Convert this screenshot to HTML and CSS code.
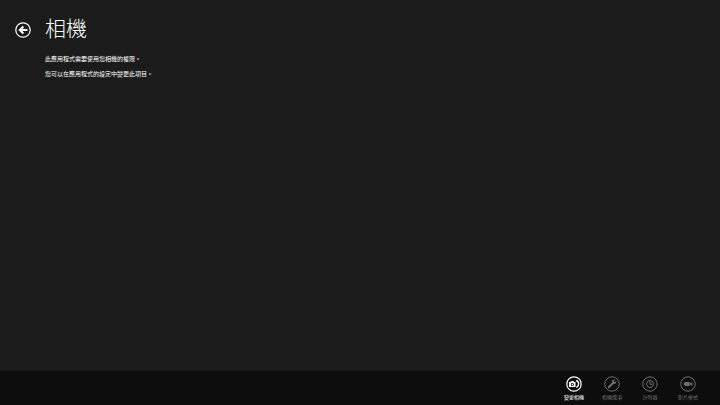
FILE: index.html
```html
<!DOCTYPE html>
<html lang="zh-TW">
<head>
    <meta charset="UTF-8">
    <meta name="viewport" content="width=device-width, initial-scale=1.0">
    <title>相機</title>
    <link rel="stylesheet" href="styles.css">
</head>
<body>
    <header>
        <button class="back" aria-label="返回">
            <svg viewBox="0 0 16 16">
                <circle cx="8" cy="8" r="7.2" fill="none" stroke="currentColor" stroke-width="1.2"/>
                <path d="M12.4 8H5M8.4 4.5L4.8 8l3.6 3.5" fill="none" stroke="currentColor" stroke-width="2"/>
            </svg>
        </button>
        <h1>相機</h1>
    </header>

    <main>
        <p>此應用程式需要使用您相機的權限。</p>
        <p>您可以在應用程式的設定中變更此項目。</p>
    </main>

    <footer class="app-bar">
        <button class="command">
            <svg viewBox="0 0 16 16">
                <circle cx="8" cy="8" r="7.2" fill="none" stroke="currentColor" stroke-width="1.2"/>
                <path fill="currentColor" fill-rule="evenodd" d="M3 6h1.5l.6-.9h2.4l.6.9h1.4v5H3zM6.3 6.8a1.6 1.6 0 1 0 0 3.2 1.6 1.6 0 0 0 0-3.2z"/>
                <circle cx="6.3" cy="8.4" r=".8" fill="currentColor"/>
                <path d="M10.2 4.5c3.2 1 3.3 5.6.2 7" fill="none" stroke="currentColor" stroke-width="1.4"/>
            </svg>
            <span>變更相機</span>
        </button>
        <button class="command" disabled>
            <svg viewBox="0 0 16 16">
                <circle cx="8" cy="8" r="7.2" fill="none" stroke="currentColor"/>
                <path d="M4.8 11.3l4.5-4.5" fill="none" stroke="currentColor" stroke-width="2" stroke-linecap="round"/>
                <path fill="currentColor" d="M11.2 3.8L9.7 5.3l1 1 1.5-1.5c.7 1.7-.7 3.7-2.8 3.3L7.9 6.6c-.4-2.1 1.6-3.5 3.3-2.8z"/>
            </svg>
            <span>相機選項</span>
        </button>
        <button class="command" disabled>
            <svg viewBox="0 0 16 16">
                <circle cx="8" cy="8" r="7.2" fill="none" stroke="currentColor"/>
                <circle cx="8" cy="8" r="3.5" fill="none" stroke="currentColor"/>
                <path d="M8 5.7v2.6h2.2" fill="none" stroke="currentColor"/>
            </svg>
            <span>計時器</span>
        </button>
        <button class="command" disabled>
            <svg viewBox="0 0 16 16">
                <circle cx="8" cy="8" r="7.2" fill="none" stroke="currentColor"/>
                <path fill="currentColor" d="M3.7 6.7h1V6h5v4h-5v-.9h-1zM10 7.5L12.3 6v4L10 8.5z"/>
            </svg>
            <span>影片模式</span>
        </button>
    </footer>
</body>
</html>
```
FILE: styles.css
```css
* {
    box-sizing: border-box;
}

body {
    display: flex;
    flex-direction: column;
    min-height: 100vh;
    margin: 0;
    background: #1b1b1b;
    color: #fff;
    font-family: "Noto Sans CJK TC", sans-serif;
}

header {
    display: flex;
    align-items: center;
    gap: 14px;
    padding: 13px 15px 0;
}

h1 {
    margin: 0;
    font-size: 21px;
    font-weight: 300;
    line-height: 28px;
}

button {
    padding: 0;
    border: none;
    background: none;
    color: inherit;
    font-family: inherit;
    cursor: pointer;
}

.back {
    padding-top: 6px;
}

svg {
    display: block;
    width: 16px;
    height: 16px;
}

main {
    flex: 1;
    padding: 13px 45px;
}

main p {
    margin: 0 0 5px;
    font-size: 6px;
    line-height: 10px;
}

/* Bottom bar */
.app-bar {
    display: flex;
    justify-content: flex-end;
    padding: 5px 13px 4px;
    background: #0d0d0d;
}

.command {
    display: flex;
    flex-direction: column;
    align-items: center;
    gap: 1px;
    width: 38px;
    font-size: 5px;
    line-height: 8px;
}

.command:disabled {
    color: #6e6e6e;
    cursor: default;
}
```
